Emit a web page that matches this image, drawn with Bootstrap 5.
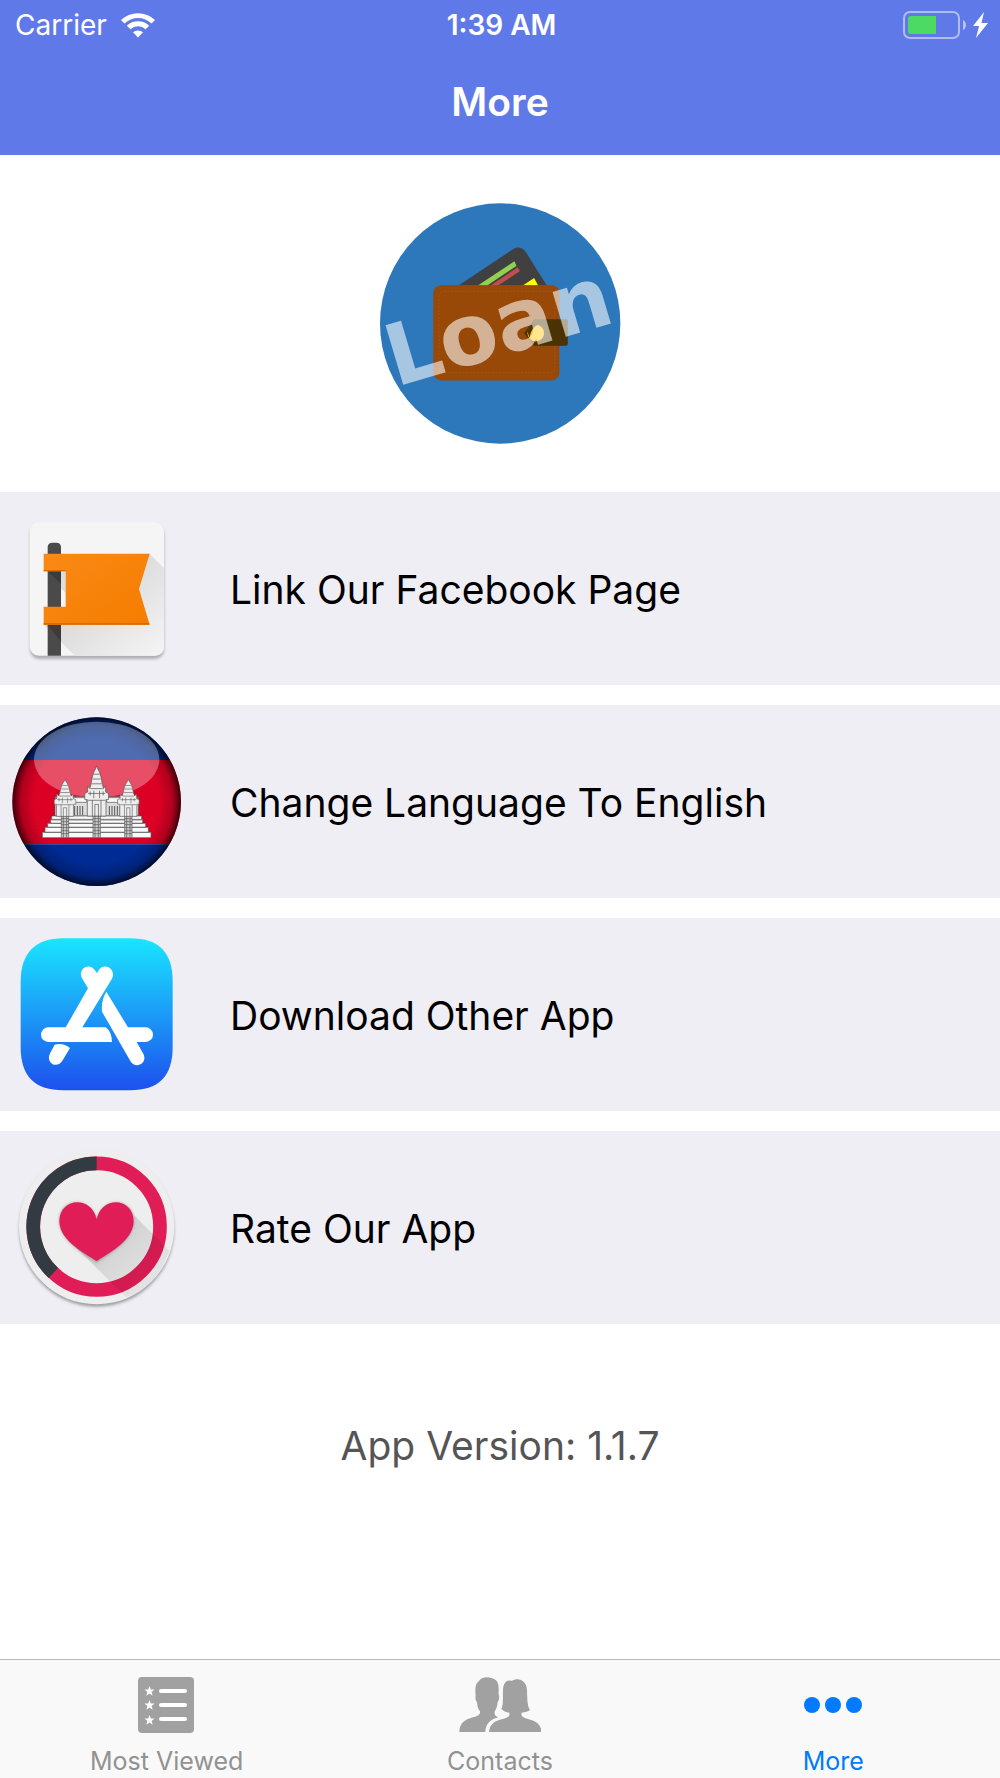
<!DOCTYPE html>
<html lang="en">
<head>
<meta charset="utf-8">
<meta name="viewport" content="width=device-width, initial-scale=1">
<title>More</title>
<link href="https://cdn.jsdelivr.net/npm/bootstrap@5.3.0/dist/css/bootstrap.min.css" rel="stylesheet">
<style>
  body { font-family: Inter, "Liberation Sans", sans-serif; background: #fff; color: #000; }
  .app-header { background: #5f7ae8; color: #fff; height: 155px; }
  .status-bar { height: 50px; padding: 0 12px 0 15px; font-size: 28px; line-height: 32px; }
  .signal { gap: 14px; }
  .power { gap: 6px; }
  .app-title { font-size: 39px; line-height: 48px; padding-top: 28px; }
  .logo-area { padding: 48px 0; }
  .logo-area svg { overflow: visible; }
  .menu-list { gap: 20px; }
  .menu-item { background: #efeef4; color: #000; font-size: 39px; line-height: 48px; gap: 37px; }
  .menu-item span { padding-top: 2px; }
  .version-label { color: #555; font-size: 39px; line-height: 48px; padding-top: 98px; }
  .tab-bar { background: #f9f9f9; border-top: 1px solid #b9b9bb; height: 119px; }
  .tab-item { color: #929292; font-size: 25px; line-height: 28px; padding-top: 13px; gap: 10px; }
  .tab-item.active { color: #007aff; }
  svg { display: block; flex: none; }
</style>
<script src="https://cdn.jsdelivr.net/npm/bootstrap@5.3.0/dist/js/bootstrap.bundle.min.js"></script>
</head>
<body class="d-flex flex-column min-vh-100">

<header class="app-header">
  <div class="status-bar row g-0 align-items-center">
    <div class="signal col d-flex align-items-center">
      <span>Carrier</span>
      <svg width="34" height="25" viewBox="0 0 34 25" fill="#fff" aria-hidden="true">
        <path d="M17 24.500l-5-5.200a7.500 7.500 0 0 1 10 0z"/>
        <path d="M5.800 12.700a16.500 16.500 0 0 1 22.400 0l-3.600 3.600a11.300 11.300 0 0 0-15.200 0z"/>
        <path d="M0 7a24.500 24.500 0 0 1 34 0l-3.500 3.500a19.500 19.500 0 0 0-27 0z"/>
      </svg>
    </div>
    <div class="col-auto fw-semibold">1:39 AM</div>
    <div class="power col d-flex align-items-center justify-content-end">
      <svg width="64" height="28" viewBox="0 0 64 28" aria-hidden="true">
        <rect x="1" y="1" width="55" height="26" rx="6" fill="none" stroke="#fff" stroke-opacity=".5" stroke-width="2"/>
        <path d="M60 9q3 1.500 3 5t-3 5z" fill="#fff" fill-opacity=".55"/>
        <path d="M8 5h25v18H8q-3 0-3-3V8q0-3 3-3z" fill="#4cd964"/>
      </svg>
      <svg width="15" height="26" viewBox="0 0 15 26" fill="#fff" aria-hidden="true"><path d="M11 0L0 14h6L3 26l12-15H8.500z"/></svg>
    </div>
  </div>
  <h1 class="app-title fw-semibold text-center mb-0">More</h1>
</header>

<main>
  <div class="logo-area d-flex justify-content-center">
    <svg width="241" height="241" viewBox="29 39 724 724" role="img" aria-label="Loan">
      <circle cx="390" cy="401" r="361" fill="#2d77bb"/>
      <path d="M265 287L430 177q20-11 36 8l64 102z" fill="#404040"/>
      <path d="M323 287l110-73 6 14-88 59z" fill="#92d050"/>
      <path d="M361 287l82-55 6 12-65 43z" fill="#c0504d"/>
      <path d="M458 287l34-23 12 23z" fill="#ff0"/>
      <rect x="189" y="286" width="379" height="286" rx="24" fill="#984807"/>
      <rect x="207" y="304" width="347" height="245" rx="14" fill="none" stroke="#a3561a" stroke-width="3" stroke-dasharray="6 5"/>
      <path d="M492 388h95q6 0 6 6v68q0 6-6 6h-95l-30-38z" fill="#4a3203"/>
      <circle cx="497" cy="430" r="25" fill="#ffc000"/>
      <path d="M472 424q4-16 28-28l4 8q-22 12-26 40z" fill="#4a3203"/>
      <text transform="translate(76 592) rotate(-16.500)" font-family="'DejaVu Sans', 'Liberation Sans', sans-serif" font-weight="700" font-size="256" fill="#fff" fill-opacity=".58">Loan</text>
    </svg>
  </div>

  <nav class="menu-list d-flex flex-column" aria-label="More options">
    <a href="#" class="menu-item d-flex align-items-center text-decoration-none">
      <svg width="193" height="193" viewBox="0 37 579 579" aria-hidden="true">
        <defs>
          <linearGradient id="flagShade" x1="0" y1="0" x2="1" y2="1"><stop offset=".3" stop-color="#d6d6d6"/><stop offset="1" stop-color="#f5f5f5"/></linearGradient>
          <linearGradient id="flagOrange" x1="0" y1="0" x2="1" y2="1"><stop offset="0" stop-color="#f98a16"/><stop offset="1" stop-color="#f57c00"/></linearGradient>
          <filter id="soft" x="-20%" y="-20%" width="140%" height="140%"><feGaussianBlur stdDeviation="5"/></filter>
        </defs>
        <rect x="90" y="136" width="402" height="402" rx="28" fill="#77777f" fill-opacity=".55" filter="url(#soft)"/>
        <rect x="89" y="128" width="403" height="400" rx="28" fill="#f5f5f5"/>
        <path d="M448 222l44 43v235q0 28-28 28H224l-92-93z" fill="url(#flagShade)"/>
        <path d="M143 528V203q0-14 14-14h12q14 0 14 14v325z" fill="#4a4a4a"/>
        <path d="M143 275h40v38zM143 436h40v50z" fill="#3b3b3b"/>
        <path d="M183 275h14v65l-14-14z" fill="#dedede"/>
        <path d="M131 222h318l-32 106 32 107H131v-54h66V275h-66z" fill="url(#flagOrange)"/>
        <path d="M131 430h317v5H131zM131 271h66v4h-66z" fill="#d96c00"/>
      </svg>
      <span>Link Our Facebook Page</span>
    </a>

    <a href="#" class="menu-item d-flex align-items-center text-decoration-none">
      <svg width="193" height="193" viewBox="0 15 579 579" aria-hidden="true">
        <defs>
          <clipPath id="ball"><circle cx="290" cy="305" r="253"/></clipPath>
          <radialGradient id="ballEdge"><stop offset=".74" stop-color="#000" stop-opacity="0"/><stop offset=".9" stop-color="#000" stop-opacity=".2"/><stop offset="1" stop-color="#000" stop-opacity=".72"/></radialGradient>
          <g id="tower" fill="#eee" stroke="#555" stroke-width="2">
            <path d="M-26 108V60l-7 0V42l8-4V20l6 8 3-12 4-22 4-14 5-10 3-8 3 8 5 10 4 14 4 22 3 12 6-8v18l8 4v18h-7v48z"/>
            <path d="M-17 28H17M-14 14H14M-11 0H11M-8-14H8M-24 42H24M-24 62H24M-12 108V62M12 108V62M-5 108V74H5v34M-18 48v-12M-8 56V34M8 56V34M18 48v-12" fill="none"/>
          </g>
        </defs>
        <g clip-path="url(#ball)">
          <path d="M30 50h520v130H30z" fill="#002a8f"/>
          <path d="M30 180h520v253H30z" fill="#dc0024"/>
          <path d="M30 433h520v130H30z" fill="#002a94"/>
        </g>
        <circle cx="290" cy="305" r="253" fill="url(#ballEdge)"/>
        <ellipse cx="290" cy="179" rx="188" ry="114" fill="#fff" fill-opacity=".31"/>
        <g stroke="#555" stroke-width="2" fill="#fafafa">
          <path d="M165 290h250v58H165z" fill="#ddd"/>
          <path d="M215 293h45v14h-45zM320 293h45v14h-45z"/>
          <path d="M224 318v28m8-28v28m8-28v28m8-28v28m80-28v28m8-28v28m8-28v28m8-28v28m8-28v28M175 310v38m-7-60v18m244-18v18m-7 4v38" fill="none" stroke-width="3"/>
          <path d="M155 348h270v12H155zM152 358h276v12H152zM143 370h294v12H143zM135 382h310v15H135zM127 397h326v16H127z"/>
          <path d="M184 348h22v65h-22zM279 348h22v65h-22zM374 348h22v65h-22z" fill="#ccc"/>
          <path d="M190 348v65m10-65v65m85-65v65m10-65v65m85-65v65m10-65v65M184 356h22m-22 9h22m-22 9h22m-22 9h22m-22 9h22m-22 9h22M279 356h22m-22 9h22m-22 9h22m-22 9h22m-22 9h22m-22 9h22M374 356h22m-22 9h22m-22 9h22m-22 9h22m-22 9h22m-22 9h22" fill="none"/>
        </g>
        <use href="#tower" transform="translate(195 267) scale(.98 .76)"/>
        <use href="#tower" transform="translate(385 267) scale(.98 .76)"/>
        <use href="#tower" transform="translate(290 237) scale(1.080 1.030)"/>
      </svg>
      <span>Change Language To English</span>
    </a>

    <a href="#" class="menu-item d-flex align-items-center text-decoration-none">
      <svg width="193" height="193" viewBox="0 24 579 579" aria-hidden="true">
        <defs><linearGradient id="storeBlue" x1="0" y1="0" x2="0" y2="1"><stop offset="0" stop-color="#1ae5ff"/><stop offset="1" stop-color="#1d50ee"/></linearGradient></defs>
        <path d="M190 85H390C480 85 518 130 518 215V412C518 500 475 541 390 541H190C105 541 62 500 62 412V215C62 130 105 85 190 85z" fill="url(#storeBlue)"/>
        <g fill="#fff">
          <path d="M264 235L247 206C229 177 271 153 287 184L291 190 294 184C311 153 352 178 335 208L247 352H317Q336 366 336 396H145A22 22 0 0 1 145 352H197z"/>
          <path d="M319 245L384 352H437A22 22 0 0 1 437 396H410L429 430C446 459 407 480 391 453L306 305Q303 270 319 245z"/>
          <path d="M164 404Q190 398 210 414L188 451C171 480 134 458 151 428z"/>
        </g>
      </svg>
      <span>Download Other App</span>
    </a>

    <a href="#" class="menu-item d-flex align-items-center text-decoration-none">
      <svg width="193" height="193" viewBox="0 33 579 579" aria-hidden="true">
        <defs>
          <linearGradient id="heartShade" x1="0" y1="0" x2="1" y2="1"><stop offset=".25" stop-color="#000" stop-opacity=".14"/><stop offset=".9" stop-color="#000" stop-opacity=".03"/></linearGradient>
        </defs>
        <circle cx="290" cy="328" r="232" fill="#66666f" fill-opacity=".6" filter="url(#soft)"/>
        <circle cx="290" cy="320" r="233" fill="#eee"/>
        <circle cx="290" cy="320" r="190" fill="none" stroke="#e11d57" stroke-width="41"/>
        <path d="M290 130A190 190 0 0 0 160 459" fill="none" stroke="#333b42" stroke-width="41"/>
        <path d="M392 275L508 392Q470 500 378 532L215 370 290 420z" fill="url(#heartShade)"/>
        <path d="M290 428C265 410 178 365 178 304C178 232 270 228 290 298C310 228 401 232 401 304C401 365 315 410 290 428z" fill="#777" fill-opacity=".6" filter="url(#soft)"/>
        <path d="M290 424C265 405 178 365 178 304C178 232 275 225 290 298C305 225 401 232 401 304C401 365 315 405 290 424z" fill="#e11d57"/>
      </svg>
      <span>Rate Our App</span>
    </a>
  </nav>

  <p class="version-label text-center mb-5">App Version: 1.1.7</p>
</main>

<nav class="tab-bar row g-0 mt-auto" aria-label="Tabs">
  <a href="#" class="tab-item col d-flex flex-column align-items-center text-decoration-none">
    <svg width="82" height="64" viewBox="0 0 82 64" aria-hidden="true">
      <rect x="12" y="4" width="56" height="56" rx="4" fill="#a1a1a1"/>
      <path d="M35 18h24M35 32h24M35 46h24" stroke="#fff" stroke-width="4" stroke-linecap="round"/>
      <g fill="#fff">
        <path id="star" d="M23.500 13l1.300 3.500h3.700l-2.900 2.400 1.100 3.800-3.200-2.200-3.200 2.200 1.100-3.800-2.900-2.400h3.700z"/>
        <use href="#star" y="14"/><use href="#star" y="29"/>
      </g>
    </svg>
    <span>Most Viewed</span>
  </a>
  <a href="#" class="tab-item col d-flex flex-column align-items-center text-decoration-none">
    <svg width="82" height="64" viewBox="1196 69 246 192" fill="#a1a1a1" aria-hidden="true">
      <path d="M1197 246C1197 222 1212 208 1238 202C1254 198 1260 194 1259 184C1254 178 1251 170 1250 156C1246 153 1244 142 1246 136C1244 112 1246 100 1254 95C1264 78 1290 78 1306 90C1317 98 1315 120 1315 134C1318 140 1316 152 1312 156C1311 170 1307 178 1303 184C1302 194 1304 199 1314 202C1290 208 1276 222 1275 246z"/>
      <path d="M1286 246C1288 222 1304 211 1330 206C1344 202 1349 199 1347 188C1338 187 1328 183 1323 177C1330 164 1327 140 1328 122C1328 96 1342 88 1354 93C1374 80 1400 92 1400 122C1401 144 1400 166 1409 180C1403 185 1394 187 1384 188C1381 198 1386 202 1400 206C1426 212 1443 222 1443 246z"/>
    </svg>
    <span>Contacts</span>
  </a>
  <a href="#" class="tab-item active col d-flex flex-column align-items-center text-decoration-none" aria-current="page">
    <svg width="82" height="64" viewBox="0 0 82 64" fill="#007aff" aria-hidden="true">
      <circle cx="20" cy="32" r="8"/><circle cx="41" cy="32" r="8"/><circle cx="62" cy="32" r="8"/>
    </svg>
    <span>More</span>
  </a>
</nav>
</body>
</html>
